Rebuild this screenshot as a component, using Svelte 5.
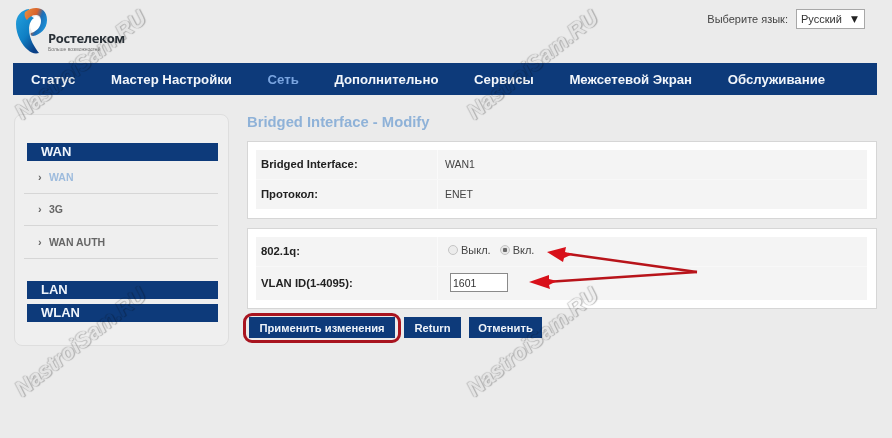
<script>
  let navItems = ["Статус", "Мастер Настройки", "Сеть", "Дополнительно", "Сервисы", "Межсетевой Экран", "Обслуживание"];
  let activeNav = "Сеть";
  let wanItems = ["WAN", "3G", "WAN AUTH"];
  let activeItem = "WAN";
  let vlanMode = "on";
  let vlanId = "1601";
</script>

<div class="page">
  <header class="top">
    <div class="logo">
      <svg class="logo-mark" viewBox="0 0 32 47" width="32" height="47" aria-hidden="true">
        <defs>
          <linearGradient id="bodyGrad" x1="0" y1="0" x2="0.7" y2="1">
            <stop offset="0" stop-color="#27a4e0" />
            <stop offset="0.6" stop-color="#0f7fc4" />
            <stop offset="1" stop-color="#0a3f86" />
          </linearGradient>
          <linearGradient id="loopGrad" x1="0" y1="0" x2="1" y2="0.5">
            <stop offset="0" stop-color="#e8903e" />
            <stop offset="0.5" stop-color="#d8622c" />
            <stop offset="0.72" stop-color="#1f6db5" />
            <stop offset="1" stop-color="#1a8fd6" />
          </linearGradient>
        </defs>
        <ellipse cx="20" cy="18" rx="6" ry="9" fill="#fff" />
        <path fill="url(#bodyGrad)" d="M13 2C5 3 0 9 0 17c0 11 6 21 12 26 3 3 7 4 11 3-4-5-10-14-10-24 0-5 2-9 5-11-3-1-5-5-5-9z" />
        <path fill="url(#loopGrad)" d="M9 5C16-1 31-2 31 13c0 9-7 15-14 16-2 0-3-2-2-3 5-1 10-6 10-12 0-4-2-6-5-6-4 0-7 2-9 5-2-2-3-5-2-8z" />
      </svg>
      <div class="logo-text">
        <span class="logo-name">Ростелеком</span>
        <span class="logo-sub">Больше возможностей</span>
      </div>
    </div>
    <div class="lang">
      <span class="lang-label">Выберите язык:</span>
      <div class="lang-select">
        <span>Русский</span>
        <span class="lang-arrow">▼</span>
      </div>
    </div>
  </header>

  <nav class="nav">
    {#each navItems as item}
      <span class={item === activeNav ? "nav-item nav-active" : "nav-item"}>{item}</span>
    {/each}
  </nav>

  <div class="content">
    <aside class="sidebar">
      <div class="side-head">WAN</div>
      <ul class="side-list">
        {#each wanItems as item}
          <li class={item === activeItem ? "side-item side-active" : "side-item"}>
            <span class="side-arrow">›</span>{item}
          </li>
        {/each}
      </ul>
      <div class="side-head side-lan">LAN</div>
      <div class="side-head side-wlan">WLAN</div>
    </aside>

    <main class="main">
      <h1 class="title">Bridged Interface - Modify</h1>

      <section class="card">
        <div class="row">
          <div class="label">Bridged Interface:</div>
          <div class="value">WAN1</div>
        </div>
        <div class="row">
          <div class="label">Протокол:</div>
          <div class="value">ENET</div>
        </div>
      </section>

      <section class="card card-vlan">
        <div class="row row-radio">
          <div class="label">802.1q:</div>
          <div class="value radios">
            <label><input type="radio" name="vlan" value="off" bind:group={vlanMode} />Выкл.</label>
            <label><input type="radio" name="vlan" value="on" bind:group={vlanMode} />Вкл.</label>
          </div>
        </div>
        <div class="row row-input">
          <div class="label">VLAN ID(1-4095):</div>
          <div class="value"><input class="vlan-input" type="text" bind:value={vlanId} /></div>
        </div>
      </section>

      <div class="actions">
        <span class="ring"><button class="btn btn-apply">Применить изменения</button></span>
        <button class="btn btn-return">Return</button>
        <button class="btn btn-cancel">Отменить</button>
      </div>
    </main>
  </div>

  <!-- annotation arrows drawn over the page -->
  <svg class="arrows" width="892" height="438" viewBox="0 0 892 438" aria-hidden="true">
    <g fill="none" stroke="#b8141a" stroke-width="2.5">
      <path d="M697 272 L568 254" />
      <path d="M697 272 L546 282" />
    </g>
    <path fill="#d8101a" d="M547 252 L566 247 L565 252 L573 254 L564 258 L563 262 Z" />
    <path fill="#d8101a" d="M529 282 L549 275 L549 279 L557 281 L549 285 L550 289 Z" />
  </svg>

  <span class="wm wm-a">NastroiSam.RU</span>
  <span class="wm wm-b">NastroiSam.RU</span>
  <span class="wm wm-c">NastroiSam.RU</span>
  <span class="wm wm-d">NastroiSam.RU</span>
</div>

<style>
  :global(body) {
    background: #ebebeb;
  }

  .page {
    position: relative;
    width: 892px;
    height: 438px;
    overflow: hidden;
    background: #ebebeb;
    font-family: "Liberation Sans", Arial, sans-serif;
  }

  .top {
    height: 63px;
    display: flex;
    justify-content: space-between;
    align-items: flex-start;
    padding: 0 27px 0 16px;
    box-sizing: border-box;
  }

  .logo {
    display: flex;
    padding-top: 7px;
  }

  .logo-text {
    display: flex;
    flex-direction: column;
    padding: 24px 0 0 0;
  }

  .logo-name {
    font-size: 13px;
    line-height: 15px;
    font-weight: bold;
    color: #2a3138;
    font-family: "Open Sans", sans-serif;
    letter-spacing: -0.4px;
  }

  .logo-sub {
    font-size: 5px;
    line-height: 6px;
    color: #777;
  }

  .lang {
    display: flex;
    align-items: center;
    gap: 8px;
    padding-top: 9px;
  }

  .lang-label {
    font-size: 11px;
    color: #444;
  }

  .lang-select {
    width: 69px;
    height: 20px;
    box-sizing: border-box;
    background: #fff;
    border: 1px solid #a8a8a8;
    display: flex;
    justify-content: space-between;
    align-items: center;
    padding: 0 6px 0 4px;
    font-size: 11px;
    color: #333;
  }

  .lang-arrow {
    font-size: 9px;
    color: #222;
    font-family: "DejaVu Sans", sans-serif;
  }

  .nav {
    margin: 0 15px 0 13px;
    height: 32px;
    background: #0d3a7a;
    display: flex;
    align-items: center;
    gap: 35.6px;
    padding-left: 18px;
  }

  .nav-item {
    font-size: 13.2px;
    font-weight: bold;
    color: #f2f6fb;
  }

  .nav-active {
    color: #7aa5e0;
  }

  .content {
    display: flex;
    padding: 19px 15px 0 14px;
    gap: 18px;
  }

  .sidebar {
    width: 215px;
    height: 232px;
    box-sizing: border-box;
    flex: none;
    background: #efefef;
    border: 1px solid #dedede;
    border-radius: 8px;
    padding: 28px 10px 0 12px;
  }

  .side-head {
    height: 18px;
    line-height: 17px;
    background: #0d3a7a;
    color: #eef4fb;
    font-size: 13px;
    font-weight: bold;
    padding-left: 14px;
  }

  .side-lan {
    margin-top: 22.5px;
  }

  .side-wlan {
    margin-top: 5px;
  }

  .side-list {
    list-style: none;
    margin: 0 0 0 -3px;
    padding: 0;
  }

  .side-item {
    height: 32.5px;
    box-sizing: border-box;
    border-bottom: 1px solid #d6d6d6;
    font-size: 10.5px;
    font-weight: bold;
    color: #666;
    display: flex;
    align-items: center;
    padding-left: 14px;
  }

  .side-active {
    color: #9dbbdd;
  }

  .side-arrow {
    width: 11px;
    color: #666;
    font-size: 11px;
  }

  .main {
    flex: 1;
    min-width: 0;
  }

  .title {
    margin: 0;
    height: 27px;
    line-height: 17px;
    font-size: 14.8px;
    font-weight: bold;
    color: #8fb2d8;
  }

  .card {
    height: 78px;
    box-sizing: border-box;
    background: #fff;
    border: 1px solid #d6d6d6;
    padding: 8px 9px 8px 8px;
    margin-bottom: 9px;
  }

  .card-vlan {
    height: 81px;
  }

  .row {
    display: flex;
    height: 29px;
    background: #f4f4f4;
    align-items: center;
    box-sizing: border-box;
  }

  .row + .row {
    border-top: 1px solid #f8f8f8;
    height: 30px;
  }

  .row + .row-input {
    height: 34px;
  }

  .label {
    width: 182px;
    height: 100%;
    box-sizing: border-box;
    display: flex;
    align-items: center;
    padding: 0 0 2px 5px;
    border-right: 1px solid #fafafa;
    font-size: 11.3px;
    font-weight: bold;
    color: #222;
  }

  .value {
    padding: 0 0 2px 7px;
    font-size: 10.5px;
    color: #444;
  }

  .radios {
    display: flex;
    gap: 9px;
    padding: 0 0 3px 10px;
    font-size: 11px;
  }

  .radios label {
    display: flex;
    align-items: center;
    gap: 3px;
  }

  .radios input {
    appearance: none;
    width: 10px;
    height: 10px;
    margin: 0;
    border: 1px solid #c4c4c4;
    border-radius: 50%;
    background: #ececec;
    box-sizing: border-box;
  }

  .radios input:checked {
    background: radial-gradient(circle, #6a6a6a 0 2px, #e6e6e6 2.5px);
  }

  .vlan-input {
    width: 58px;
    height: 19px;
    box-sizing: border-box;
    margin-left: 5px;
    padding: 0 2px;
    border: 1px solid #8a8a8a;
    background: #fff;
    font-family: inherit;
    font-size: 10.5px;
    color: #333;
    display: block;
  }

  .actions {
    display: flex;
    align-items: flex-start;
    margin-top: -5px;
    margin-left: -4px;
  }

  .ring {
    display: block;
    border: 3px solid #a8141f;
    border-radius: 9px;
    padding: 1px 3px 2px 3px;
  }

  .btn {
    display: block;
    height: 21px;
    border: 0;
    padding: 0;
    background: #0d3a7a;
    color: #eef3f9;
    font-family: inherit;
    font-size: 11.2px;
    font-weight: bold;
  }

  .btn-apply {
    width: 146px;
  }

  .btn-return {
    width: 57px;
    margin: 4px 0 0 3px;
  }

  .btn-cancel {
    width: 73px;
    margin: 4px 0 0 8px;
  }

  .arrows {
    position: absolute;
    left: 0;
    top: 0;
    pointer-events: none;
  }

  .wm {
    position: absolute;
    font-size: 22px;
    font-weight: bold;
    font-style: italic;
    line-height: 24px;
    white-space: nowrap;
    color: #f8f8f8;
    text-shadow: 0 0 1px #b4b4b4, 1px 1px 1px #c2c2c2, -1px -1px 1px #dadada;
    transform: rotate(-38.5deg);
    transform-origin: left center;
    mix-blend-mode: multiply;
    pointer-events: none;
  }

  .wm-a { left: 18px; top: 103px; }
  .wm-b { left: 470px; top: 103px; }
  .wm-c { left: 18px; top: 380px; }
  .wm-d { left: 470px; top: 380px; }
</style>
